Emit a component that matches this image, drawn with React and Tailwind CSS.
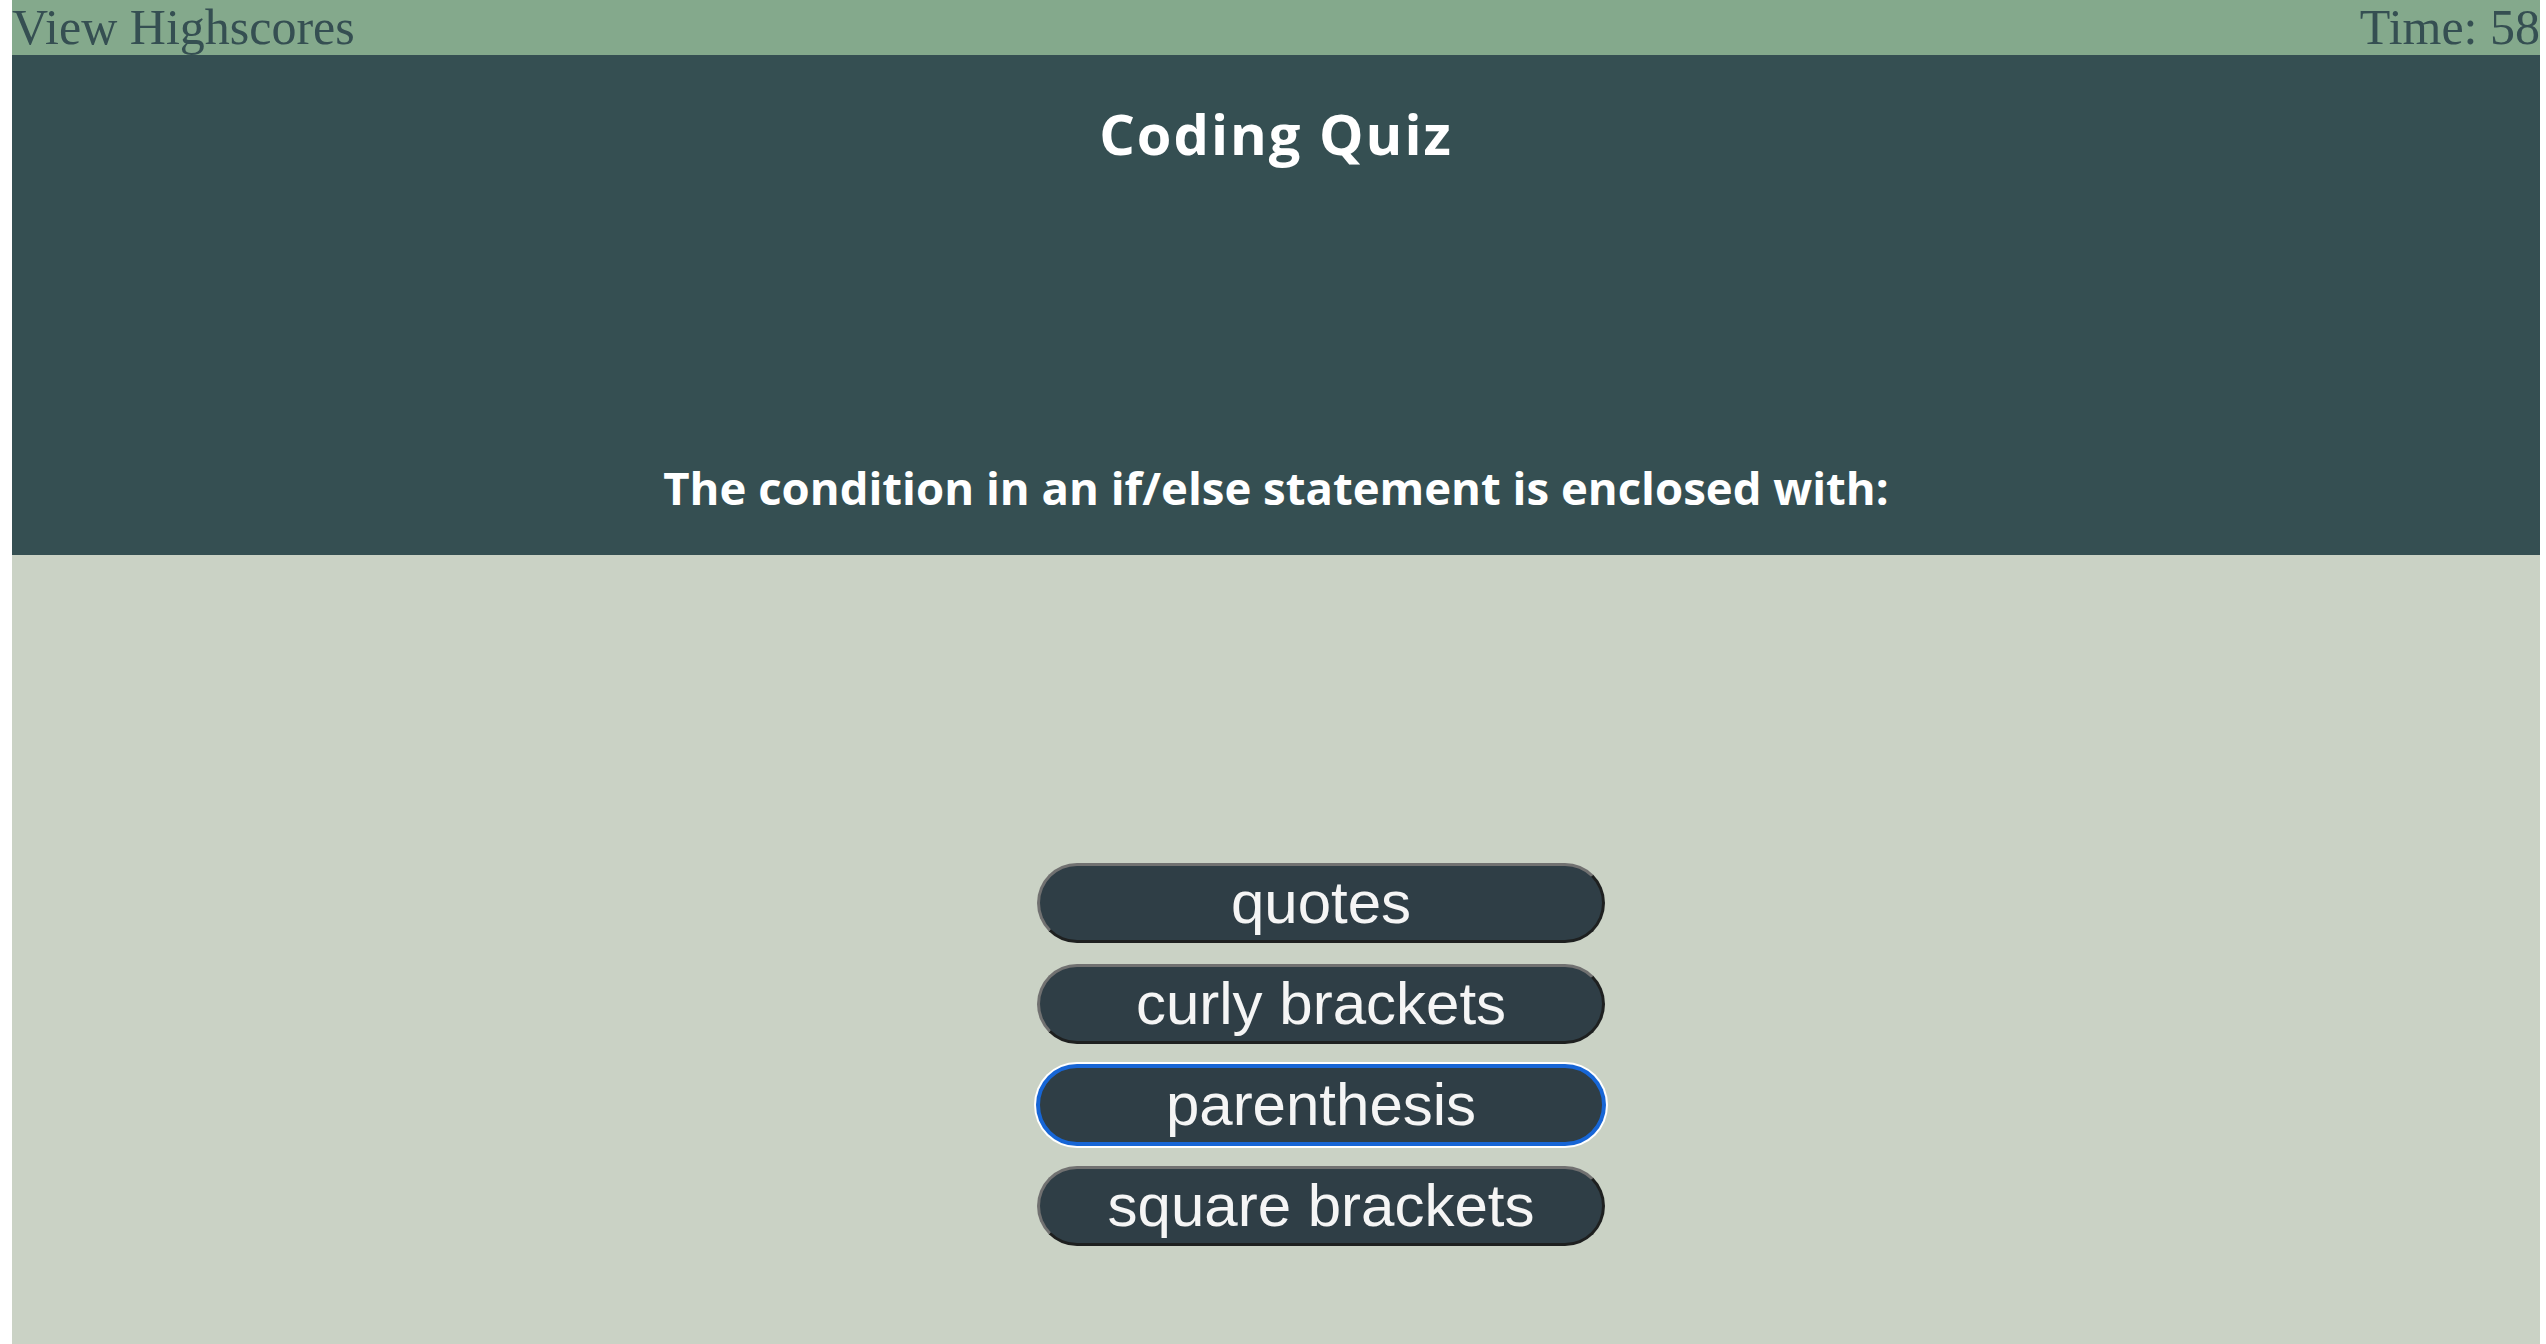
import React from "react";

const answers = ["quotes", "curly brackets", "parenthesis", "square brackets"];

export default function App() {
  return (
    <div className="min-h-screen bg-white pl-[12px] pr-[6px] flex flex-col">
      <header className="h-[55px] bg-[#84a98c] flex justify-between items-start text-[#354f52] text-[50px] leading-[55px] font-['Liberation_Serif',serif] overflow-hidden">
        <a className="cursor-pointer">View Highscores</a>
        <span>Time: 58</span>
      </header>
      <section className="h-[500px] bg-[#354f52] text-white font-['Open_Sans',sans-serif] font-bold flex flex-col items-center pt-[50px]">
        <h1 className="text-[56px] leading-[56px] tracking-[2px]">Coding Quiz</h1>
        <h2 className="mt-[303px] text-[45.5px] leading-[46px]">
          The condition in an if/else statement is enclosed with:
        </h2>
      </section>
      <main className="flex-1 bg-[#cad2c5] pt-[308px] pl-[90px] pb-[80px] flex flex-col items-center gap-[21px]">
        {answers.map((a, i) =>
          i === 2 ? (
            <button
              key={a}
              className="w-[568px] h-[80px] rounded-full bg-[#2f3e46] text-[#f5f5f5] text-[60px] leading-none font-['Liberation_Sans',Arial,sans-serif] border-[3px] border-[#1766d6] shadow-[0_0_0_1px_#1766d6,0_0_0_3px_#ffffff] flex items-center justify-center"
            >
              {a}
            </button>
          ) : (
            <button
              key={a}
              className="w-[568px] h-[80px] rounded-full bg-[#2f3e46] text-[#f5f5f5] text-[60px] leading-none font-['Liberation_Sans',Arial,sans-serif] border-[3px] border-t-[#717171] border-l-[#717171] border-b-[#1e2020] border-r-[#1e2020] flex items-center justify-center"
            >
              {a}
            </button>
          )
        )}
      </main>
    </div>
  );
}
